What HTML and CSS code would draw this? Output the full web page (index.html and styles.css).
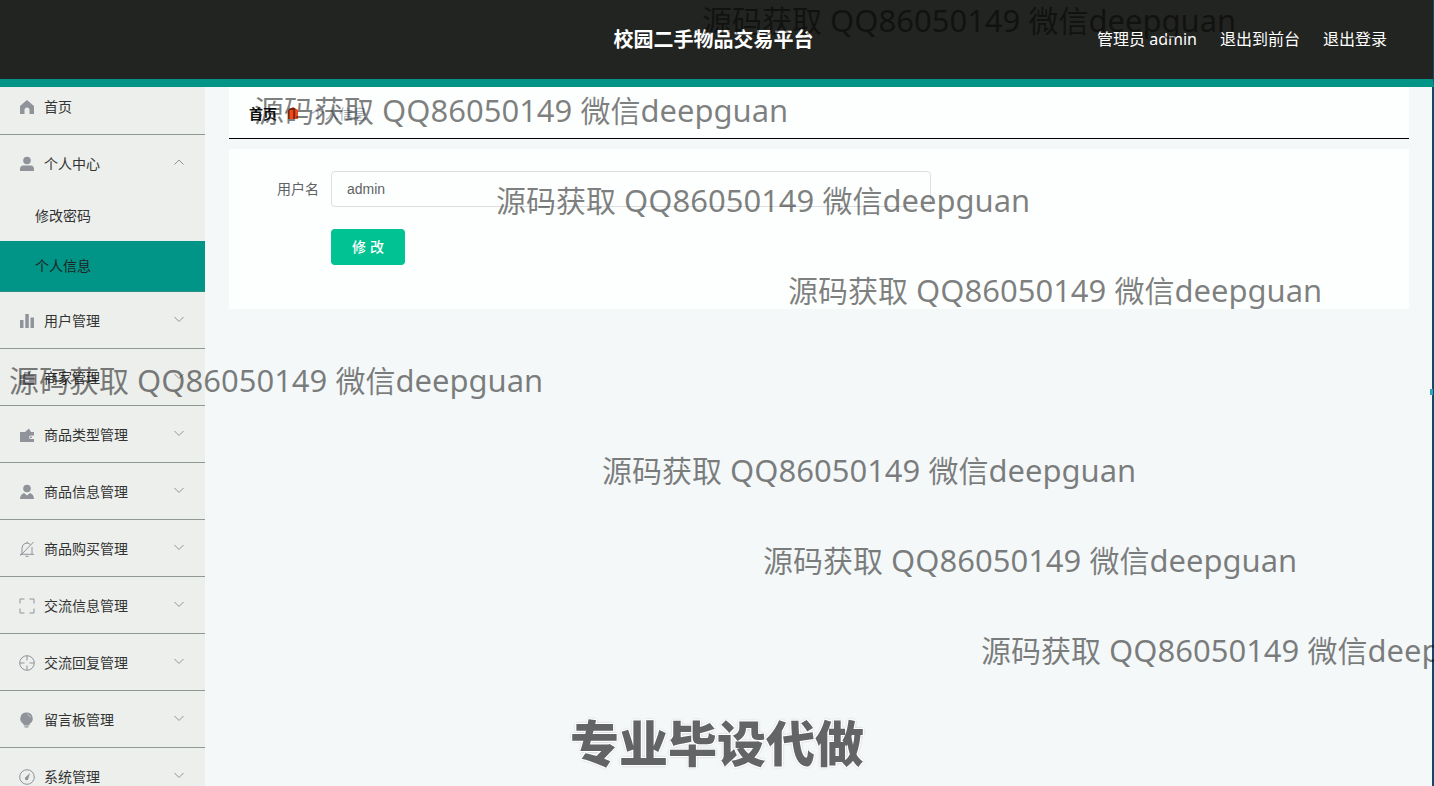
FILE: index.html
```html
<!DOCTYPE html>
<html lang="zh-CN">
<head>
    <meta charset="UTF-8">
    <meta name="viewport" content="width=device-width, initial-scale=1.0">
    <title>校园二手物品交易平台</title>
    <link rel="stylesheet" href="styles.css">
</head>
<body>
    <header class="header">
        <h1 class="title">校园二手物品交易平台</h1>
        <nav class="user-nav">
            <span>管理员 admin</span>
            <a href="#">退出到前台</a>
            <a href="#">退出登录</a>
        </nav>
    </header>

    <div class="layout">
        <nav class="sidebar">
            <a href="#" class="menu-item">
                <svg class="icon" viewBox="0 0 16 16"><path d="M8 1 1 7v8h4.500v-4a2.500 2.500 0 0 1 5 0v4H15V7z"/></svg>
                <span class="menu-text">首页</span>
            </a>
            <div class="menu-group">
                <button type="button" class="menu-item">
                    <svg class="icon" viewBox="0 0 16 16"><circle cx="8" cy="4.500" r="3.800"/><path d="M1 15v-2a3.500 3.500 0 0 1 3.500-3.500h7A3.500 3.500 0 0 1 15 13v2z"/></svg>
                    <span class="menu-text">个人中心</span>
                    <svg class="arrow" viewBox="0 0 10 10"><path d="M0.500 7.500 5 3l4.500 4.500"/></svg>
                </button>
                <a href="#" class="sub-item">修改密码</a>
                <a href="#" class="sub-item active">个人信息</a>
            </div>
            <button type="button" class="menu-item">
                <svg class="icon" viewBox="0 0 16 16"><path d="M1 7h3.500v8H1zM6.300 1h3.500v14H6.300zM11.500 4.500H15V15h-3.500z"/></svg>
                <span class="menu-text">用户管理</span>
                <svg class="arrow" viewBox="0 0 10 10"><path d="M0.500 3 5 7.500 9.500 3"/></svg>
            </button>
            <button type="button" class="menu-item">
                <svg class="icon" viewBox="0 0 16 16"><path d="M1 5h4V2h6v3h4v4H1zM6.500 3.500V5h3V3.500zM1 10h5v1.500h4V10h5v5H1z"/></svg>
                <span class="menu-text">商家管理</span>
                <svg class="arrow" viewBox="0 0 10 10"><path d="M0.500 3 5 7.500 9.500 3"/></svg>
            </button>
            <button type="button" class="menu-item">
                <svg class="icon" viewBox="0 0 16 16"><path d="M1 5h5l4-3.500L12 5h3v3.500h-3.500a1.800 1.800 0 0 0 0 3.500H15v3H1z"/><circle cx="12" cy="10.200" r="0.900"/></svg>
                <span class="menu-text">商品类型管理</span>
                <svg class="arrow" viewBox="0 0 10 10"><path d="M0.500 3 5 7.500 9.500 3"/></svg>
            </button>
            <button type="button" class="menu-item">
                <svg class="icon" viewBox="0 0 16 16"><circle cx="8" cy="4.500" r="3.800"/><path d="M1 15c0-3 1.500-5 4-6l3 2.500L11 9c2.500 1 4 3 4 6z"/></svg>
                <span class="menu-text">商品信息管理</span>
                <svg class="arrow" viewBox="0 0 10 10"><path d="M0.500 3 5 7.500 9.500 3"/></svg>
            </button>
            <button type="button" class="menu-item">
                <svg class="icon line" viewBox="0 0 16 16"><path d="M3 13V7a5 5 0 0 1 8.500-3.500M13 6v7M1 13.300h14M6.500 15.300h3M8 2V.7M1.500 14.500 14.500 1"/></svg>
                <span class="menu-text">商品购买管理</span>
                <svg class="arrow" viewBox="0 0 10 10"><path d="M0.500 3 5 7.500 9.500 3"/></svg>
            </button>
            <button type="button" class="menu-item">
                <svg class="icon line" viewBox="0 0 16 16"><path d="M1 5.500V1h4.500M10.500 1H15v4.500M15 10.500V15h-4.500M5.500 15H1v-4.500"/></svg>
                <span class="menu-text">交流信息管理</span>
                <svg class="arrow" viewBox="0 0 10 10"><path d="M0.500 3 5 7.500 9.500 3"/></svg>
            </button>
            <button type="button" class="menu-item">
                <svg class="icon line" viewBox="0 0 16 16"><circle cx="8" cy="8" r="7.300"/><path d="M8 1v4.500M8 10.500V15M1 8h4.500M10.500 8H15"/></svg>
                <span class="menu-text">交流回复管理</span>
                <svg class="arrow" viewBox="0 0 10 10"><path d="M0.500 3 5 7.500 9.500 3"/></svg>
            </button>
            <button type="button" class="menu-item">
                <svg class="icon" viewBox="0 0 16 16"><path d="M7.500.5a6 6 0 0 1 3.500 11l-1 2H5l-1-2A6 6 0 0 1 7.500.5zM5.500 14.200h4v1.300h-4z"/><path class="shine" d="M8.500 2.500a4 4 0 0 1 3 3"/></svg>
                <span class="menu-text">留言板管理</span>
                <svg class="arrow" viewBox="0 0 10 10"><path d="M0.500 3 5 7.500 9.500 3"/></svg>
            </button>
            <button type="button" class="menu-item">
                <svg class="icon line" viewBox="0 0 16 16"><circle cx="8" cy="8" r="7.300"/><path class="needle" d="M11 4 9.300 9.500a1.700 1.700 0 1 1-2.500-1.500z"/></svg>
                <span class="menu-text">系统管理</span>
                <svg class="arrow" viewBox="0 0 10 10"><path d="M0.500 3 5 7.500 9.500 3"/></svg>
            </button>
        </nav>

        <main class="content">
            <div class="breadcrumb">
                <a href="#" class="crumb-home">首页</a>
                <svg class="crumb-icon" viewBox="0 0 12 12"><path d="M6 0 11 3v9H1V3z"/></svg>
                <span class="crumb-current">个人信息</span>
            </div>
            <form class="panel">
                <div class="form-row">
                    <label for="username">用户名</label>
                    <input type="text" id="username" value="admin">
                </div>
                <button type="button" class="submit-btn">修 改</button>
            </form>
        </main>
    </div>

    <div class="overlay">
        <span class="mark mark-1">源码获取<span class="latin"> QQ86050149 </span>微信<span class="latin">deepguan</span></span>
        <span class="mark mark-2">源码获取<span class="latin"> QQ86050149 </span>微信<span class="latin">deepguan</span></span>
        <span class="mark mark-3">源码获取<span class="latin"> QQ86050149 </span>微信<span class="latin">deepguan</span></span>
        <span class="mark mark-4">源码获取<span class="latin"> QQ86050149 </span>微信<span class="latin">deepguan</span></span>
        <span class="mark mark-5">源码获取<span class="latin"> QQ86050149 </span>微信<span class="latin">deepguan</span></span>
        <span class="mark mark-6">源码获取<span class="latin"> QQ86050149 </span>微信<span class="latin">deepguan</span></span>
        <span class="mark mark-7">源码获取<span class="latin"> QQ86050149 </span>微信<span class="latin">deepguan</span></span>
        <span class="mark mark-8">源码获取<span class="latin"> QQ86050149 </span>微信<span class="latin">deepguan</span></span>
        <span class="banner">专业毕设代做</span>
        <span class="edge-handle"></span>
    </div>
</body>
</html>
```
FILE: styles.css
```css
* {
    box-sizing: border-box;
}
body {
    margin: 0;
    height: 100vh;
    overflow: hidden;
    display: flex;
    flex-direction: column;
    background-color: #f4f8f9;
    font-family: "Liberation Sans", "Noto Sans CJK SC", sans-serif;
    font-size: 14px;
    color: #333;
}
a {
    color: inherit;
    text-decoration: none;
}
button {
    font: inherit;
    color: inherit;
    cursor: pointer;
}

/* header */
.header {
    position: relative;
    z-index: 1;
    flex: none;
    display: grid;
    grid-template-columns: 1fr auto 1fr;
    align-items: center;
    height: 87px;
    margin-bottom: -9px;
    padding: 0 46px 0 40px;
    background-color: #222421;
    border-bottom: 8px solid #009587;
    border-right: 1px solid #17466b;
    color: #fff;
    font-family: "Noto Sans", "Noto Sans CJK SC", sans-serif;
}
.title {
    grid-column: 2;
    margin: 0;
    font-size: 20px;
    line-height: 28px;
}
.user-nav {
    display: flex;
    justify-content: flex-end;
    gap: 23px;
    padding-bottom: 3px;
    font-size: 16px;
}

/* sidebar */
.layout {
    flex: 1;
    min-height: 0;
    display: flex;
}
.sidebar {
    flex: none;
    width: 205px;
    overflow: hidden;
    background-color: #ecefec;
}
.menu-item {
    display: flex;
    align-items: center;
    width: 100%;
    height: 57px;
    padding: 2px 21px 0 19px;
    background: none;
    border: 0;
    border-bottom: 1px solid #909894;
    text-align: left;
}
.menu-group .menu-item {
    height: 56px;
    border-bottom: 0;
}
.menu-text {
    flex: 1;
    margin-left: 9px;
    padding-bottom: 2px;
}
.icon {
    width: 16px;
    height: 16px;
    fill: #909399;
}
.icon.line {
    fill: none;
    stroke: #909399;
}
.icon .needle {
    fill: #909399;
    stroke: none;
}
.icon .shine {
    fill: none;
    stroke: #c4c8c8;
}
.arrow {
    width: 10px;
    height: 10px;
    margin-bottom: 5px;
    fill: none;
    stroke: #909399;
    stroke-width: 1;
}
.sub-item {
    display: block;
    padding-left: 35px;
    line-height: 50px;
}
.sub-item.active {
    background-color: #009587;
    border-bottom: 1px solid #2a9086;
    color: #222;
}

/* content */
.content {
    flex: 1;
    min-width: 0;
    padding: 9px 23px 0 24px;
    border-right: 2px solid #17466b;
}
.breadcrumb {
    display: flex;
    align-items: center;
    height: 52px;
    padding: 0 20px;
    background-color: #fdfffe;
    border-bottom: 1px solid #000;
}
.crumb-home {
    font-weight: bold;
    color: #111;
}
.crumb-icon {
    width: 12px;
    height: 12px;
    margin: 0 12px 0 10px;
    fill: #f04a1a;
}
.crumb-current {
    color: #a4acbc;
}
.panel {
    height: 160px;
    margin: 10px 0 0;
    padding: 22px 48px;
    background-color: #fdfffe;
}
.form-row {
    display: flex;
    align-items: center;
    gap: 12px;
    margin-bottom: 22px;
    color: #606266;
}
.form-row label {
    padding-bottom: 2px;
}
.form-row input {
    flex: 0 1 600px;
    min-width: 0;
    height: 36px;
    padding: 0 15px;
    background-color: #fdfffe;
    border: 1px solid #dcdfe2;
    border-radius: 4px;
    color: #606266;
    font: inherit;
}
.submit-btn {
    width: 74px;
    height: 36px;
    margin-left: 54px;
    padding: 0 0 2px;
    background-color: #00c292;
    border: 0;
    border-radius: 4px;
    color: #fff;
    font-weight: 500;
}

/* text floating over the page */
.overlay {
    position: absolute;
    inset: 0;
    z-index: 2;
    overflow: hidden;
    pointer-events: none;
}
.mark {
    position: absolute;
    white-space: nowrap;
    font-family: "Noto Sans", "Noto Sans CJK SC", sans-serif;
    font-size: 30px;
    line-height: 40px;
    color: rgba(0, 0, 0, 0.5);
}
.latin {
    font-size: 31px;
}
.mark-1 { left: 702px; top: 0; }
.mark-2 { left: 254px; top: 90px; }
.mark-3 { left: 496px; top: 180px; }
.mark-4 { left: 788px; top: 270px; }
.mark-5 { left: 9px; top: 360px; }
.mark-6 { left: 602px; top: 450px; }
.mark-7 { left: 763px; top: 540px; }
.mark-8 { left: 981px; top: 630px; }
.banner {
    position: absolute;
    left: 0;
    right: 0;
    bottom: 10px;
    text-align: center;
    font-family: "Noto Sans CJK SC", sans-serif;
    font-size: 49px;
    line-height: 70px;
    font-weight: 900;
    color: #626466;
    text-shadow: 0 0 1px #fff, 1px 1px 0 #fff, -1px -1px 0 #fff, 1px -1px 0 #fff, -1px 1px 0 #fff, 0 0 3px #888;
}
.edge-handle {
    position: absolute;
    right: 1px;
    top: 389px;
    width: 3px;
    height: 6px;
    background-color: #2fa5c0;
}
```
